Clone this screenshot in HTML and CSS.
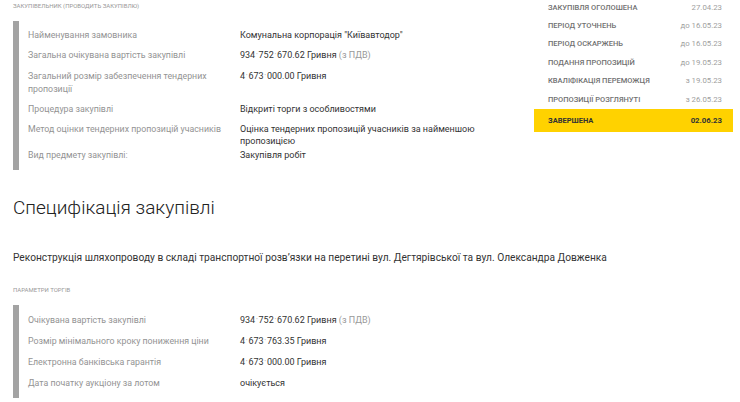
FILE: index.html
```html
<!DOCTYPE html>
<html lang="uk">
<head>
<meta charset="utf-8">
<link rel="stylesheet" href="styles.css">
</head>
<body>
<div class="page">
  <div class="top">
    <div class="main">
      <div class="caps caps-first">Закупівельник (проводить закупівлю)</div>
      <div class="table table-1">
        <div class="row"><div class="lbl">Найменування замовника</div><div class="val">Комунальна корпорація "Київавтодор"</div></div>
        <div class="row"><div class="lbl">Загальна очікувана вартість закупівлі</div><div class="val">934<span class="sep">ˈ</span>752<span class="sep">ˈ</span>670.62 Гривня <span class="muted">(з ПДВ)</span></div></div>
        <div class="row"><div class="lbl">Загальний розмір забезпечення тендерних пропозиції</div><div class="val">4<span class="sep">ˈ</span>673<span class="sep">ˈ</span>000.00 Гривня</div></div>
        <div class="row"><div class="lbl">Процедура закупівлі</div><div class="val">Відкриті торги з особливостями</div></div>
        <div class="row"><div class="lbl">Метод оцінки тендерних пропозицій учасників</div><div class="val">Оцінка тендерних пропозицій учасників за найменшою пропозицією</div></div>
        <div class="row row-tight"><div class="lbl">Вид предмету закупівлі:</div><div class="val">Закупівля робіт</div></div>
      </div>
    </div>
    <div class="aside">
      <div class="step"><span class="s-name">Закупівля оголошена</span><span class="s-date">27.04.23</span></div>
      <div class="step"><span class="s-name">Період уточнень</span><span class="s-date">до 16.05.23</span></div>
      <div class="step"><span class="s-name">Період оскаржень</span><span class="s-date">до 16.05.23</span></div>
      <div class="step"><span class="s-name">Подання пропозицій</span><span class="s-date">до 19.05.23</span></div>
      <div class="step"><span class="s-name">Кваліфікація переможця</span><span class="s-date">з 19.05.23</span></div>
      <div class="step"><span class="s-name">Пропозиції розглянуті</span><span class="s-date">з 26.05.23</span></div>
      <div class="step step-active"><span class="s-name">Завершена</span><span class="s-date">02.06.23</span></div>
    </div>
  </div>

  <h2 class="title">Специфікація закупівлі</h2>
  <p class="desc">Реконструкція шляхопроводу в складі транспортної розв’язки на перетині вул. Дегтярівської та вул. Олександра Довженка</p>

  <div class="caps caps-second">Параметри торгів</div>
  <div class="table table-2">
    <div class="row"><div class="lbl">Очікувана вартість закупівлі</div><div class="val">934<span class="sep">ˈ</span>752<span class="sep">ˈ</span>670.62 Гривня <span class="muted">(з ПДВ)</span></div></div>
    <div class="row"><div class="lbl">Розмір мінімального кроку пониження ціни</div><div class="val">4<span class="sep">ˈ</span>673<span class="sep">ˈ</span>763.35 Гривня</div></div>
    <div class="row"><div class="lbl">Електронна банківська гарантія</div><div class="val">4<span class="sep">ˈ</span>673<span class="sep">ˈ</span>000.00 Гривня</div></div>
    <div class="row"><div class="lbl">Дата початку аукціону за лотом</div><div class="val">очікується</div></div>
  </div>
</div>
</body>
</html>
```

FILE: styles.css
```css
html, body {
  margin: 0;
  padding: 0;
  background: #fff;
}
body {
  font-family: Roboto, "Liberation Sans", Arial, sans-serif;
  color: #333;
  overflow: hidden;
}
.page {
  padding-left: 13px;
  width: 727px;
}
.top {
  display: flex;
  align-items: flex-start;
}
.main {
  flex: 1;
}
.caps {
  font-size: 6px;
  text-transform: uppercase;
  color: #999;
  line-height: 10px;
}
.caps-first {
  margin-top: 1px;
}
.table {
  border-left: 6px solid #a3a3a3;
  padding-left: 9px;
  margin-top: 10px;
}
.table-1 {
  padding-top: 8px;
  padding-bottom: 8px;
}
.row {
  display: flex;
  line-height: 12.5px;
  padding-bottom: 7.5px;
}
.row:last-child {
  padding-bottom: 0;
}
.row-tight {
  margin-top: -6px;
}
.lbl {
  width: 212px;
  flex: none;
  font-size: 8.8px;
  color: #939393;
}
.val {
  font-size: 9px;
  color: #333;
  width: 245px;
}
.sep {
  font-size: 7px;
  color: #777;
  padding: 0 0.5px;
}
.muted {
  color: #999;
}
.aside {
  width: 199px;
  margin-right: 7px;
  margin-top: -2px;
}
.step {
  display: flex;
  justify-content: space-between;
  align-items: center;
  height: 18.4px;
  padding: 0 11px 0 14px;
}
.s-name {
  text-transform: uppercase;
  font-weight: 500;
  font-size: 7.5px;
  color: #707070;
}
.s-date {
  color: #a0a0a0;
  font-size: 7.8px;
}
.step-active {
  background: #ffd200;
  height: 23px;
  margin-top: 1px;
}
.step-active .s-name,
.step-active .s-date {
  color: #333;
  font-weight: 700;
}
.title {
  margin: 25px 0 0;
  font-size: 19px;
  font-weight: 300;
  color: #222;
  line-height: 26px;
}
.desc {
  margin: 29px 0 0;
  font-size: 10.2px;
  line-height: 16px;
  color: #333;
}
.caps-second {
  margin-top: 19px;
}
.table-2 {
  padding-top: 9px;
  padding-bottom: 9px;
}
```
